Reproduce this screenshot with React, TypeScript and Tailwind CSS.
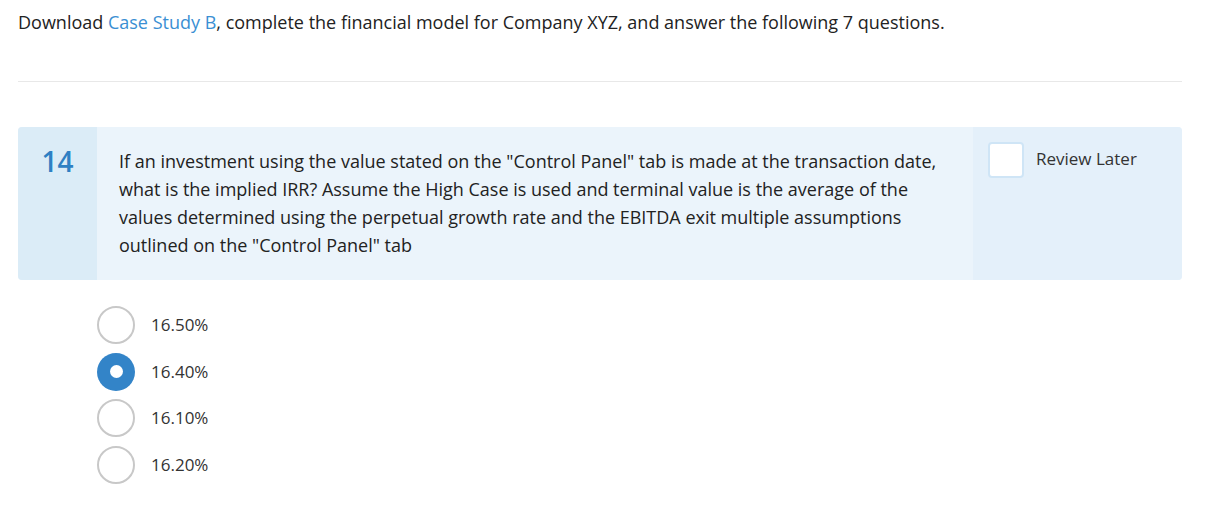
import React from "react"

const options = ["16.50%", "16.40%", "16.10%", "16.20%"]

export default function App() {
  const selected = 1
  return (
    <div className="min-h-[514px] bg-white text-[#222] pl-[18px] pr-[24px] pt-[10px]" style={{ fontFamily: '"Open Sans", sans-serif' }}>
      <p className="text-[18px] leading-[24px]">
        Download <a className="text-[#3a8fd3]">Case Study B</a>, complete the financial model for Company XYZ, and answer the following 7 questions.
      </p>
      <hr className="mt-[47px] border-0 border-t border-[#e8e8e8]" />

      <div className="mt-[45px] flex rounded-[4px] overflow-hidden bg-[#ebf4fb] h-[153px]">
        <div className="w-[79px] shrink-0 bg-[#dbecf7] flex justify-center pt-[16px]">
          <span className="text-[28px] leading-[36px] font-semibold text-[#2f80c3]">14</span>
        </div>
        <div className="flex-1 pl-[22px] pr-[30px] pt-[20px]">
          <p className="text-[18px] leading-[28px] text-[#222]">
            If an investment using the value stated on the "Control Panel" tab is made at the transaction date, what is the implied IRR? Assume the High Case is used and terminal value is the average of the values determined using the perpetual growth rate and the EBITDA exit multiple assumptions outlined on the "Control Panel" tab
          </p>
        </div>
        <div className="w-[209px] shrink-0 bg-[#e4f0fa] flex items-start gap-[12px] pl-[15px] pt-[15px]">
          <div className="w-[36px] h-[36px] bg-white border-2 border-[#cfe5f6] rounded-[4px]" />
          <span className="text-[17px] leading-[24px] text-[#333] mt-[5px]">Review Later</span>
        </div>
      </div>

      <div className="mt-[26px] pl-[79px] flex flex-col gap-[8.5px]">
        {options.map((o, i) => (
          <label key={o} className="flex items-center gap-[16px] h-[38px]">
            {i === selected ? (
              <span className="w-[38px] h-[38px] rounded-full bg-[#3384c8] flex items-center justify-center">
                <span className="w-[13px] h-[13px] rounded-full bg-white" />
              </span>
            ) : (
              <span className="w-[38px] h-[38px] rounded-full border-2 border-[#c8c8c8] bg-white" />
            )}
            <span className="text-[17px] text-[#333]">{o}</span>
          </label>
        ))}
      </div>
    </div>
  )
}
